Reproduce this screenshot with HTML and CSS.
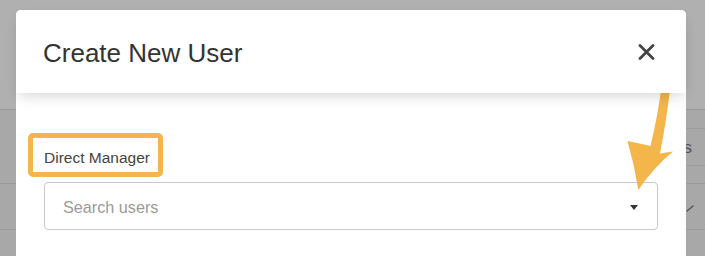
FILE: index.html
```html
<!DOCTYPE html>
<html>
<head>
<meta charset="utf-8">
<link rel="stylesheet" href="styles.css">
</head>
<body>
<div class="page">
  <div class="top-area"></div>
  <div class="band">
    <div class="band-left"></div>
    <div class="band-right">
      <div class="cell-a"></div>
      <div class="cell-b">Actions</div>
    </div>
  </div>
  <div class="row-check">
    <svg class="chev" width="10" height="10" viewBox="0 0 10 10"><path d="M2 8 L8 3" stroke="#555" stroke-width="1.4" fill="none" stroke-linecap="round"/></svg>
  </div>
  <div class="row-last"></div>
</div>

<div class="modal">
  <div class="modal-header">
    <h2 class="modal-title">Create New User</h2>
    <button class="close-btn" aria-label="Close">
      <svg width="17" height="16" viewBox="0 0 17 16"><path d="M2 1.5 L15 14.5 M15 1.5 L2 14.5" stroke="#444" stroke-width="2.8" stroke-linecap="round"/></svg>
    </button>
  </div>
  <div class="modal-body">
    <label class="field-label">Direct Manager</label>
    <div class="select-box">
      <span class="placeholder">Search users</span>
      <span class="caret"></span>
    </div>
  </div>
</div>

<svg class="annotation-arrow" width="705" height="256" viewBox="0 0 705 256">
  <path d="M662.5 80 Q663 75 667 75 Q671.5 75 671 80 Q667 118 660 153.5 L673 151.5 Q653 168 638.3 190 Q634.5 165 627.5 141 Q640 143.5 650.5 146 Q658 115 662.5 80 Z" fill="#F4B54B"/>
</svg>
</body>
</html>
```

FILE: styles.css
```css
* { box-sizing: border-box; }
html, body {
  margin: 0;
  padding: 0;
  width: 705px;
  height: 256px;
  overflow: hidden;
  font-family: "Liberation Sans", Arial, sans-serif;
}
body { position: relative; background: #a9a9a9; }

.page {
  width: 705px;
  height: 256px;
  background: #a8a8a8;
}
.top-area {
  height: 110px;
  background: #b0b0b0;
  border-bottom: 1px solid #999;
}
.band {
  display: flex;
  height: 74px;
  border-bottom: 1px solid #999;
}
.band-left { flex: 1; }
.band-right {
  width: 300px;
  display: flex;
  flex-direction: column;
}
.cell-a {
  height: 19px;
  border-bottom: 1px solid #9c9c9c;
}
.cell-b {
  height: 37px;
  border-bottom: 1px solid #9c9c9c;
  text-align: right;
  padding-right: 13px;
  font-size: 17px;
  line-height: 37px;
  color: #555;
}
.row-check {
  height: 46px;
  border-bottom: 1px solid #999;
  display: flex;
  justify-content: flex-end;
  align-items: center;
  padding-right: 10px;
}
.chev { margin-top: 2px; }
.row-last { height: 24px; }

.modal {
  position: absolute;
  left: 16px;
  top: 10px;
  width: 670px;
  height: 270px;
  background: #fff;
  border-radius: 5px;
}
.modal-header {
  position: relative;
  z-index: 1;
  height: 83px;
  display: flex;
  align-items: center;
  justify-content: space-between;
  padding: 0 31px 0 27px;
  background: #fff;
  border-radius: 5px 5px 0 0;
  box-shadow: 0 6px 14px -3px rgba(0, 0, 0, 0.16);
}
.modal-title {
  margin: 0;
  padding-top: 3px;
  font-size: 26px;
  font-weight: normal;
  color: #333;
}
.close-btn {
  border: 0;
  background: none;
  padding: 0;
  width: 17px;
  height: 16px;
  display: flex;
  margin-top: 1px;
}
.modal-body {
  padding: 40px 28px 0 28px;
  display: flex;
  flex-direction: column;
  align-items: flex-start;
}
.field-label {
  display: inline-block;
  margin-left: -16px;
  border: 5px solid #F4B54B;
  border-radius: 5px;
  padding: 5px 8px 0 11px;
  height: 44px;
  line-height: 29px;
  font-size: 15.5px;
  color: #444;
}
.select-box {
  margin-top: 5px;
  width: 100%;
  height: 48px;
  border: 1px solid #c9c9c9;
  border-radius: 4px;
  display: flex;
  align-items: center;
  justify-content: space-between;
  padding: 0 19px 0 18px;
}
.placeholder {
  font-size: 16.2px;
  color: #9a9a9a;
  padding-top: 2px;
}
.caret {
  width: 0;
  height: 0;
  border-left: 4.5px solid transparent;
  border-right: 4.5px solid transparent;
  border-top: 5px solid #333;
  margin-top: 2px;
}

.annotation-arrow {
  position: absolute;
  left: 0;
  top: 0;
  pointer-events: none;
}
```
